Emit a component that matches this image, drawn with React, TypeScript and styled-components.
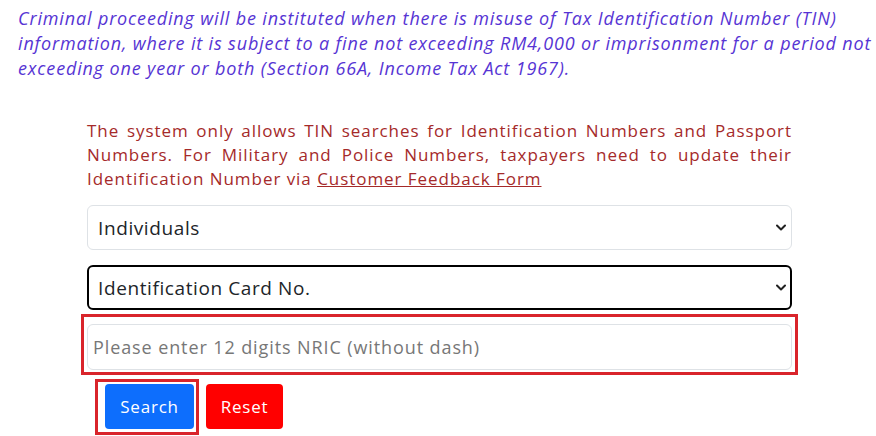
import React from "react";
import styled, { createGlobalStyle } from "styled-components";

const GlobalStyle = createGlobalStyle`
  body {
    margin: 0;
    background: #ffffff;
    font-family: "Open Sans", "Noto Sans", sans-serif;
    color: #212529;
  }
`;

const Page = styled.div`
  width: 876px;
  height: 436px;
  overflow: hidden;
  padding: 6px 0 0 18px;
  box-sizing: border-box;
`;

const Notice = styled.p`
  margin: 0;
  font-style: italic;
  font-size: 18px;
  line-height: 25px;
  letter-spacing: 0.85px;
  color: #5634d4;
  white-space: nowrap;
`;

const Column = styled.div`
  width: 705px;
  margin: 38px 0 0 69px;
`;

const Rules = styled.div`
  font-size: 17px;
  line-height: 24px;
  color: #a52a2a;
  letter-spacing: 0.95px;
`;

const RuleLine = styled.span<{ $fill?: boolean }>`
  display: block;
  text-align: ${(p) => (p.$fill ? "justify" : "left")};
  text-align-last: ${(p) => (p.$fill ? "justify" : "left")};
`;

const FormLink = styled.a`
  color: #a52a2a;
  text-decoration: underline;
`;

const SelectWrap = styled.div<{ $gap: number }>`
  position: relative;
  margin-top: ${(p) => p.$gap}px;
`;

const Select = styled.select<{ $active?: boolean }>`
  appearance: none;
  width: 100%;
  height: 45px;
  box-sizing: border-box;
  padding: 0 30px 0 ${(p) => (p.$active ? 9 : 10)}px;
  border: ${(p) => (p.$active ? "2px solid #000" : "1px solid #dee2e6")};
  border-radius: 6px;
  background: #fff;
  font-family: inherit;
  font-size: 19px;
  letter-spacing: 0.6px;
  color: #212529;
  outline: none;
`;

const Chevron = styled.svg`
  position: absolute;
  right: 6px;
  top: 19px;
  pointer-events: none;
`;

const Highlight = styled.div`
  margin: 4px 0 0 -6px;
  width: 717px;
  box-sizing: border-box;
  border: 3px solid #d9242b;
  padding: 7px 3px 2px 3px;
`;

const TextInput = styled.input`
  display: block;
  width: 100%;
  height: 46px;
  box-sizing: border-box;
  padding: 0 5px;
  border: 1px solid #dee2e6;
  border-radius: 6px;
  font-family: inherit;
  font-size: 18px;
  letter-spacing: 0.9px;
  outline: none;
  &::placeholder {
    color: #777;
  }
`;

const Actions = styled.div`
  display: flex;
  align-items: flex-start;
  margin: 4px 0 0 8px;
`;

const ButtonFrame = styled.div`
  border: 3px solid #d9242b;
  padding: 2px 2px 3px 7px;
`;

const Button = styled.button<{ $tone: string; $w: number }>`
  width: ${(p) => p.$w}px;
  height: 45px;
  border: none;
  border-radius: 4px;
  background: ${(p) => p.$tone};
  color: #fff;
  font-family: inherit;
  font-size: 17px;
  letter-spacing: 0.8px;
  cursor: pointer;
`;

const ResetButton = styled(Button)`
  margin: 5px 0 0 7px;
`;

const ChevronIcon = () => (
  <Chevron width="10" height="8" viewBox="0 0 10 8">
    <path d="M1 1.5 L5 5.5 L9 1.5" fill="none" stroke="#222" strokeWidth="2" strokeLinecap="round" strokeLinejoin="round" />
  </Chevron>
);

export default function App() {
  return (
    <>
      <GlobalStyle />
      <Page>
        <Notice>
          Criminal proceeding will be instituted when there is misuse of Tax Identification Number (TIN)
          <br />
          information, where it is subject to a fine not exceeding RM4,000 or imprisonment for a period not
          <br />
          exceeding one year or both (Section 66A, Income Tax Act 1967).
        </Notice>
        <Column>
          <Rules>
            <RuleLine $fill>The system only allows TIN searches for Identification Numbers and Passport</RuleLine>
            <RuleLine $fill>Numbers. For Military and Police Numbers, taxpayers need to update their</RuleLine>
            <RuleLine>
              Identification Number via <FormLink href="#">Customer Feedback Form</FormLink>
            </RuleLine>
          </Rules>
          <SelectWrap $gap={14}>
            <Select defaultValue="individuals">
              <option value="individuals">Individuals</option>
              <option value="company">Non-Individuals</option>
            </Select>
            <ChevronIcon />
          </SelectWrap>
          <SelectWrap $gap={15}>
            <Select $active defaultValue="ic">
              <option value="ic">Identification Card No.</option>
              <option value="passport">Passport No.</option>
            </Select>
            <ChevronIcon />
          </SelectWrap>
          <Highlight>
            <TextInput placeholder="Please enter 12 digits NRIC (without dash)" />
          </Highlight>
          <Actions>
            <ButtonFrame>
              <Button $tone="#0d6efd" $w={89}>Search</Button>
            </ButtonFrame>
            <ResetButton $tone="#ff0000" $w={77}>Reset</ResetButton>
          </Actions>
        </Column>
      </Page>
    </>
  );
}
